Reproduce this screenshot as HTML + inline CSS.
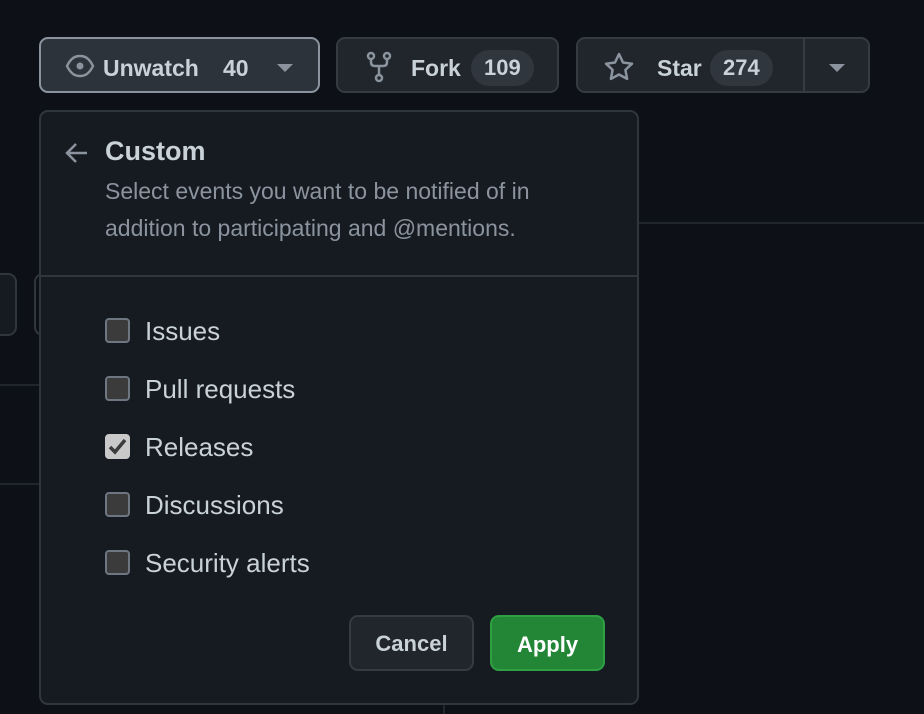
<!DOCTYPE html>
<html><head><style>
body{margin:0;width:924px;height:714px;background:#0d1117;position:relative;overflow:hidden;font-family:"Liberation Sans",sans-serif;color:#c9d1d9}
.a{position:absolute;box-sizing:border-box}
.btn{background:#21262d;border:2px solid #363b42;border-radius:9px;font-weight:bold;font-size:22px;color:#c9d1d9}
.cnt{background:#30363d;border-radius:20px;padding:5px 13px;font-weight:bold}
.cb{position:absolute;left:105px;width:25px;height:25px;border:2px solid #6e7681;background:#3b3b3b;border-radius:4px;box-sizing:border-box}
.lbl{position:absolute;left:145px;font-size:26px;color:#c9d1d9}
</style></head><body>
<div class="a" style="left:638px;top:222px;width:286px;height:2px;background:#21262d"></div>
<div class="a" style="left:0;top:384px;width:40px;height:2px;background:#21262d"></div>
<div class="a" style="left:0;top:483px;width:40px;height:2px;background:#21262d"></div>
<div class="a" style="left:443px;top:700px;width:2px;height:14px;background:#21262d"></div>
<div class="a" style="left:-20px;top:273px;width:37px;height:63px;border:2px solid #30363d;border-radius:9px;background:#161b22"></div>
<div class="a" style="left:34px;top:273px;width:20px;height:63px;border:2px solid #30363d;border-radius:9px"></div>

<div class="a btn" style="left:39px;top:37px;width:281px;height:56px;background:#2d333b;border-color:#8b949e">
<svg class="a" style="left:24px;top:14px" width="30" height="26" viewBox="0 0 30 26"><path d="M2 13C6 5 10 3 15 3s9 2 13 10c-4 8-8 10-13 10S6 21 2 13z" fill="none" stroke="#8b949e" stroke-width="2.5"/><circle cx="15" cy="13" r="3.5" fill="#8b949e"/></svg>
<span class="a" style="left:62px;top:16px;font-size:23px">Unwatch</span><span class="a" style="left:182px;top:16px;font-size:23px">40</span>
<svg class="a" style="left:236px;top:25px" width="16" height="9"><path d="M0 0h16L8 8z" fill="#8b949e"/></svg></div>

<div class="a btn" style="left:336px;top:37px;width:223px;height:56px">
<svg class="a" style="left:28px;top:12px" width="26" height="32" viewBox="0 0 26 32"><g fill="none" stroke="#8b949e" stroke-width="2.5"><circle cx="5" cy="5" r="3"/><circle cx="21" cy="5" r="3"/><circle cx="13" cy="27" r="3"/><path d="M5 8v3q0 4 4 4h8q4 0 4-4V8M13 15v9"/></g></svg>
<span class="a" style="left:73px;top:16px;font-size:23px">Fork</span><span class="a cnt" style="left:133px;top:11px">109</span></div>

<div class="a btn" style="left:576px;top:37px;width:294px;height:56px">
<svg class="a" style="left:25px;top:12px" width="32" height="32" viewBox="0 0 32 32"><path d="M16 3l4 8.5 9 1.2-6.6 6.2 1.7 9L16 23.5 7.9 27.9l1.7-9L3 12.7l9-1.2z" fill="none" stroke="#8b949e" stroke-width="2.5" stroke-linejoin="round"/></svg>
<span class="a" style="left:79px;top:16px;font-size:23px">Star</span><span class="a cnt" style="left:132px;top:11px">274</span>
<div class="a" style="left:225px;top:-2px;width:2px;height:56px;background:#363b42"></div>
<svg class="a" style="left:251px;top:25px" width="16" height="9"><path d="M0 0h16L8 8z" fill="#8b949e"/></svg></div>

<div class="a" style="left:39px;top:110px;width:600px;height:595px;background:#161b22;border:2px solid #30363d;border-radius:9px">
<svg class="a" style="left:24px;top:30px" width="24" height="22"><path d="M22 11H3M11 2L2 11l9 9" fill="none" stroke="#8b949e" stroke-width="2.5"/></svg>
<div class="a" style="left:64px;top:24px;font-size:27px;font-weight:bold;color:#c9d1d9">Custom</div>
<div class="a" style="left:64px;top:61px;font-size:23px;line-height:37px;color:#8b949e;width:530px;white-space:nowrap">Select events you want to be notified of in<br>addition to participating and @mentions.</div>
<div class="a" style="left:-2px;top:163px;width:600px;height:2px;background:#30363d"></div>
</div>
<div class="cb" style="top:318px"></div><div class="lbl" style="top:316px">Issues</div>
<div class="cb" style="top:376px"></div><div class="lbl" style="top:374px">Pull requests</div>
<div class="cb" style="top:434px;background:#c9c9c9;border-color:#c9c9c9"><svg width="21" height="21" viewBox="0 0 21 21"><path d="M3 11l5 5L18 4" fill="none" stroke="#3b3b3b" stroke-width="3.5"/></svg></div><div class="lbl" style="top:432px">Releases</div>
<div class="cb" style="top:492px"></div><div class="lbl" style="top:490px">Discussions</div>
<div class="cb" style="top:550px"></div><div class="lbl" style="top:548px">Security alerts</div>
<div class="a btn" style="left:349px;top:615px;width:125px;height:56px;text-align:center;line-height:54px">Cancel</div>
<div class="a btn" style="left:490px;top:615px;width:115px;height:56px;background:#238636;border-color:#2ea043;color:#fff;text-align:center;line-height:56px">Apply</div>
</body></html>
